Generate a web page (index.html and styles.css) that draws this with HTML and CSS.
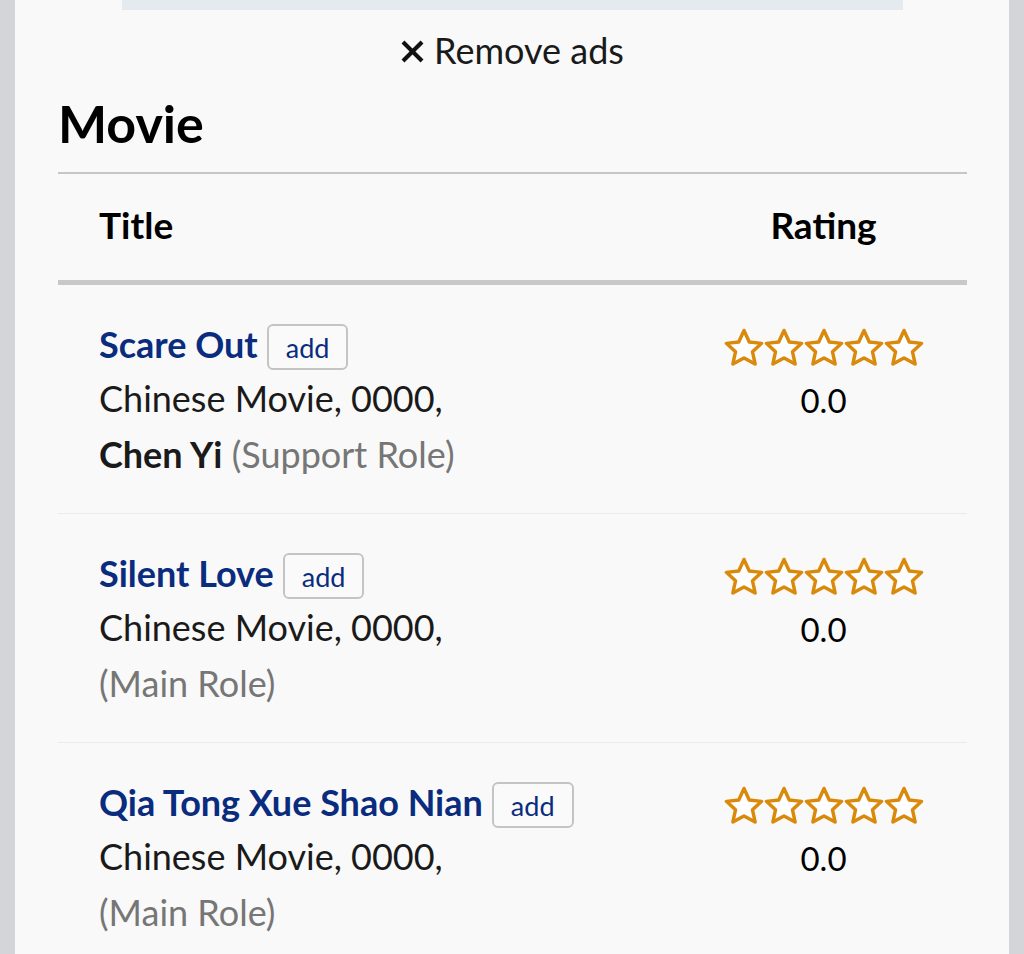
FILE: index.html
```html
<!DOCTYPE html>
<html lang="en">
<head>
    <meta charset="UTF-8">
    <meta name="viewport" content="width=device-width, initial-scale=1.0">
    <title>Filmography</title>
    <link rel="stylesheet" href="styles.css">
</head>
<body>

    <div class="page">
        <div class="ad-box"></div>
        <div class="remove-ads">
            <svg class="remove-icon" viewBox="0 0 20 20" width="23" height="23">
                <path d="M3 3 L17 17 M17 3 L3 17" stroke="#111" stroke-width="3.6" stroke-linecap="square" fill="none"/>
            </svg>
            <span>Remove ads</span>
        </div>

        <h2 class="section-title">Movie</h2>

        <table class="film-table">
            <thead>
                <tr>
                    <th class="col-title">Title</th>
                    <th class="col-rating">Rating</th>
                </tr>
            </thead>
            <tbody>
                <tr>
                    <td class="col-title">
                        <div class="film-name"><a href="#">Scare Out</a> <button class="add-btn">add</button></div>
                        <div class="film-info">Chinese Movie, 0000,</div>
                        <div class="film-info"><b>Chen Yi</b> <span class="role">(Support Role)</span></div>
                    </td>
                    <td class="col-rating">
                        <div class="stars"></div>
                        <div class="score">0.0</div>
                    </td>
                </tr>
                <tr>
                    <td class="col-title">
                        <div class="film-name"><a href="#">Silent Love</a> <button class="add-btn">add</button></div>
                        <div class="film-info">Chinese Movie, 0000,</div>
                        <div class="film-info"><span class="role">(Main Role)</span></div>
                    </td>
                    <td class="col-rating">
                        <div class="stars"></div>
                        <div class="score">0.0</div>
                    </td>
                </tr>
                <tr>
                    <td class="col-title">
                        <div class="film-name"><a href="#">Qia Tong Xue Shao Nian</a> <button class="add-btn">add</button></div>
                        <div class="film-info">Chinese Movie, 0000,</div>
                        <div class="film-info"><span class="role">(Main Role)</span></div>
                    </td>
                    <td class="col-rating">
                        <div class="stars"></div>
                        <div class="score">0.0</div>
                    </td>
                </tr>
            </tbody>
        </table>
    </div>

    <script>
        var starSvg = '<svg viewBox="2.2 2 19.6 18.8" width="40" height="38"><path d="M12 3.2 L14.6 8.9 L20.7 9.6 L16.2 13.8 L17.5 19.8 L12 16.8 L6.5 19.8 L7.8 13.8 L3.3 9.6 L9.4 8.9 Z" fill="#fff" stroke="#d98a0a" stroke-width="1.7" stroke-linejoin="round"/></svg>';
        document.querySelectorAll('.stars').forEach(function (el) {
            el.innerHTML = starSvg.repeat(5);
        });
    </script>

</body>
</html>
```

FILE: styles.css
```css
body {
    margin: 0;
    background-color: #d4d5d9;
    font-family: Lato, "Open Sans", Arial, sans-serif;
    color: #1a1a1a;
}

.page {
    margin: 0 15px;
    min-height: 954px;
    background-color: #f9f9f9;
    padding: 0 42px 0 43px;
    overflow: hidden;
}

.ad-box {
    width: 781px;
    height: 10px;
    margin: 0 auto;
    background-color: #e4eaf0;
}

.remove-ads {
    display: flex;
    justify-content: center;
    align-items: center;
    gap: 10px;
    margin-top: 18px;
    font-size: 36px;
    line-height: 44px;
    color: #1a1a1a;
}

.remove-icon {
    margin-top: 2px;
}

.section-title {
    margin: 16px 0 0;
    font-size: 52px;
    line-height: 70px;
    font-weight: 700;
    color: #000;
    padding-bottom: 14px;
    border-bottom: 2px solid #c6c6c6;
}

.film-table {
    width: 100%;
    border-collapse: collapse;
}

.film-table th {
    font-size: 37px;
    font-weight: 700;
    color: #000;
    height: 100px;
    padding: 0 0 6px;
    border-bottom: 5px solid #c8c8c8;
}

.film-table th.col-title {
    text-align: left;
    padding-left: 41px;
}

.col-rating {
    width: 287px;
    text-align: center;
}

.film-table td {
    vertical-align: top;
    padding: 33px 0 31px;
    border-bottom: 1px solid #ebebeb;
}

.film-table td.col-title {
    padding-left: 41px;
}

.film-name {
    display: flex;
    align-items: center;
    gap: 9px;
    height: 52px;
}

.film-name a {
    color: #0a2c7e;
    font-weight: 700;
    font-size: 36px;
    text-decoration: none;
}

.add-btn {
    font-family: Lato, Arial, sans-serif;
    font-size: 27px;
    color: #0a2c7e;
    background-color: #fafafa;
    border: 2px solid #c4c4c4;
    border-radius: 6px;
    padding: 0 17px;
    height: 46px;
    margin-top: 6px;
}

.film-info {
    font-size: 36px;
    line-height: 56px;
    color: #1a1a1a;
}

.film-info b {
    font-weight: 700;
}

.role {
    color: #767676;
}

.stars {
    display: flex;
    justify-content: center;
    margin-top: 10px;
    height: 38px;
}

.score {
    font-size: 33px;
    line-height: 48px;
    margin-top: 10px;
    color: #000;
}
```
